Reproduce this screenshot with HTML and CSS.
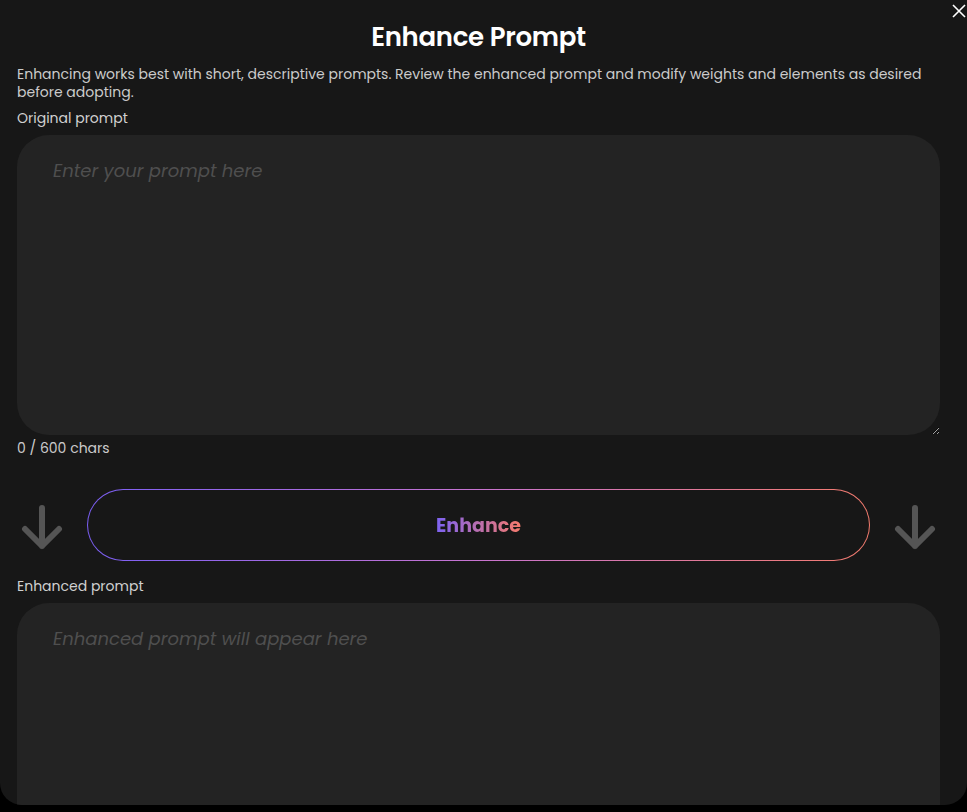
FILE: index.html
```html
<!DOCTYPE html>
<html lang="en">
<head>
  <meta charset="UTF-8" />
  <title>Enhance Prompt</title>
  <link rel="stylesheet" href="styles.css">
</head>
<body>

  <div id="modal">
    <button id="close" aria-label="Close">
      <svg width="14" height="14" viewBox="0 0 14 14"><path d="M1 1L13 13M13 1L1 13" stroke="#fff" stroke-width="1.6" fill="none"/></svg>
    </button>

    <h1>Enhance Prompt</h1>
    <p class="desc">Enhancing works best with short, descriptive prompts. Review the enhanced prompt and modify weights and elements as desired before adopting.</p>

    <label class="label" for="original">Original prompt</label>
    <textarea id="original" class="prompt" placeholder="Enter your prompt here"></textarea>
    <div class="count">0 / 600 chars</div>

    <div class="action-row">
      <svg class="arrow" width="44" height="48" viewBox="0 0 44 48"><path d="M22 6V44M5 27L22 44L39 27" stroke="#555" stroke-width="6" stroke-linecap="round" stroke-linejoin="round" fill="none"/></svg>
      <button id="enhanceBtn"><span>Enhance</span></button>
      <svg class="arrow" width="44" height="48" viewBox="0 0 44 48"><path d="M22 6V44M5 27L22 44L39 27" stroke="#555" stroke-width="6" stroke-linecap="round" stroke-linejoin="round" fill="none"/></svg>
    </div>

    <label class="label after-row" for="enhanced">Enhanced prompt</label>
    <textarea id="enhanced" class="prompt tall" placeholder="Enhanced prompt will appear here"></textarea>
  </div>

  <script>
    const original = document.getElementById("original");
    const count = document.querySelector(".count");
    original.oninput = () => {
      count.textContent = original.value.length + " / 600 chars";
    };
  </script>

</body>
</html>
```

FILE: styles.css
```css
* { box-sizing: border-box; }
body, html {
  margin: 0; padding: 0;
  background: #000;
  font-family: Poppins, Inter, "DejaVu Sans", sans-serif;
}
#modal {
  position: relative;
  height: 805px;
  overflow: hidden;
  background: #171717;
  border-radius: 0 0 22px 22px;
  padding: 18px 27px 0 17px;
  display: flex;
  flex-direction: column;
  color: #fff;
}
#close {
  position: absolute;
  top: 4px; right: 1px;
  background: none;
  border: none;
  padding: 0;
  cursor: pointer;
  line-height: 0;
}
h1 {
  margin: 0;
  font-size: 26px;
  line-height: 38px;
  font-weight: 600;
  text-align: center;
  letter-spacing: -0.3px;
}
.desc {
  margin: 9px 0 0;
  font-size: 14px;
  line-height: 18px;
  color: #cbcbcb;
}
.label {
  display: block;
  margin-top: 8px;
  font-size: 14px;
  line-height: 18px;
  color: #d0d0d0;
}
.label.after-row { margin-top: 16px; }
.prompt {
  display: block;
  width: 100%;
  height: 300px;
  margin-top: 8px;
  padding: 22px 36px;
  background: #232323;
  border: none;
  border-radius: 32px;
  color: #ddd;
  font-family: inherit;
  font-size: 18px;
  line-height: 27px;
  outline: none;
  flex-shrink: 0;
}
.prompt::placeholder {
  color: #4f4f4f;
  font-style: italic;
}
.prompt.tall { height: 320px; }
.count {
  margin-top: 4px;
  font-size: 14px;
  line-height: 18px;
  color: #cbcbcb;
}
.action-row {
  margin-top: 32px;
  display: flex;
  align-items: center;
  gap: 23px;
  padding: 0 3px;
}
.arrow { flex-shrink: 0; margin-top: 2px; }
#enhanceBtn {
  flex: 1;
  height: 72px;
  border-radius: 36px;
  border: 1px solid transparent;
  background:
    linear-gradient(#171717, #171717) padding-box,
    linear-gradient(90deg, #7b5ff5, #c874d0 50%, #f57c6e) border-box;
  cursor: pointer;
  font-family: inherit;
  font-size: 19px;
  font-weight: 700;
}
#enhanceBtn span {
  background: linear-gradient(90deg, #7d63f2, #f57a6c);
  -webkit-background-clip: text;
  background-clip: text;
  color: transparent;
}
```
